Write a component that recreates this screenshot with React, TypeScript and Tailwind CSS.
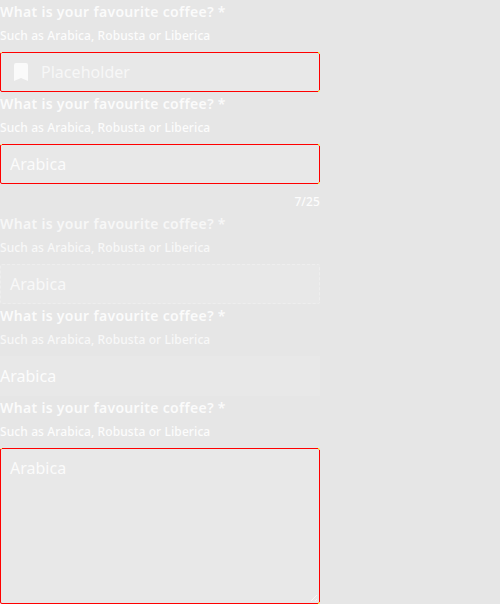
import type { ReactNode } from "react";

const edge = "relative rounded-[2px] border border-[#ff0000]";

function Corners() {
  return (
    <>
      <i className="absolute -top-px left-0 h-px w-px bg-[#ffee55]" />
      <i className="absolute -top-px right-0 h-px w-px bg-[#ffff00]" />
      <i className="absolute top-0 -right-px h-px w-px bg-[#ffee55]" />
      <i className="absolute -bottom-px right-0 h-px w-px bg-[#ffff00]" />
      <i className="absolute bottom-0 -right-px h-px w-px bg-[#ffee55]" />
    </>
  );
}

function Field({ dim = false, soft = false, children }: { dim?: boolean; soft?: boolean; children: ReactNode }) {
  return (
    <div className="flex w-80 flex-col">
      <div className={`h-6 whitespace-nowrap text-sm leading-6 font-semibold tracking-[0.32px] ${dim ? "text-[#f7f7f7]" : "text-[#fbfbfb]"}`}>
        What is your favourite coffee? *
      </div>
      <div className={`mb-2 h-5 whitespace-nowrap text-xs leading-6 font-medium tracking-[0.1px] ${dim || soft ? "text-[#f8f8f8]" : "text-[#fcfcfc]"}`}>
        Such as Arabica, Robusta or Liberica
      </div>
      {children}
    </div>
  );
}

export default function App() {
  return (
    <main className="h-[604px] w-[500px] overflow-hidden bg-[#e6e6e6] font-['Noto_Sans',sans-serif] text-base">
      <Field>
        <div className={`${edge} flex h-10 items-center bg-[#e8e8e8] pl-[13px] text-[#f7f7f7]`}>
          <Corners />
          <svg width="14" height="18" viewBox="0 0 14 18" fill="#fafafa">
            <path d="M2 0H12Q14 0 14 2V18L7 15L0 18V2Q0 0 2 0Z" />
          </svg>
          <span className="ml-[13px] tracking-[0.03px]">Placeholder</span>
        </div>
      </Field>
      <Field>
        <div className={`${edge} flex h-10 items-center bg-[#e8e8e8] pl-[9px] text-[#fbfbfb]`}>
          <Corners />
          Arabica
        </div>
        <div className="h-7 pt-2 text-right text-xs leading-5 font-medium tracking-[0.1px] text-[#fcfcfc]">7/25</div>
      </Field>
      <Field dim>
        <div className="flex h-10 items-center rounded-[2px] border border-dashed border-[#eeeeee] bg-[#e8e8e8] pl-[9px] text-[#f8f8f8]">
          Arabica
        </div>
      </Field>
      <Field soft>
        <div className="flex h-10 items-center bg-[#e8e8e8] text-[#fcfcfc]">Arabica</div>
      </Field>
      <Field>
        <div className={`${edge} h-[156px] bg-[#e8e8e8] pt-[7px] pl-[9px] leading-6 text-[#fbfbfb]`}>
          <Corners />
          Arabica
          <svg className="absolute right-[1px] bottom-[1px]" width="8" height="8" viewBox="0 0 8 8" stroke="#f8f8f8" fill="none">
            <path d="M1 7L7 1M5 7L7 5" />
          </svg>
        </div>
      </Field>
    </main>
  );
}
